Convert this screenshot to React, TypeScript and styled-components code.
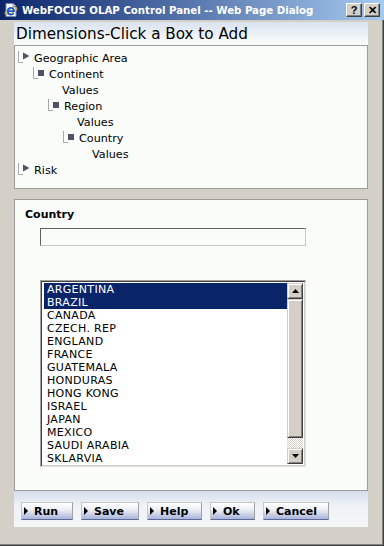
import { styled, createGlobalStyle } from "styled-components";

const countries = [
  "ARGENTINA",
  "BRAZIL",
  "CANADA",
  "CZECH. REP",
  "ENGLAND",
  "FRANCE",
  "GUATEMALA",
  "HONDURAS",
  "HONG KONG",
  "ISRAEL",
  "JAPAN",
  "MEXICO",
  "SAUDI ARABIA",
  "SKLARVIA",
];
const selected = ["ARGENTINA", "BRAZIL"];

type TreeNode = {
  label: string;
  level: number;
  kind: "group" | "dim" | "values";
};

const tree: TreeNode[] = [
  { label: "Geographic Area", level: 0, kind: "group" },
  { label: "Continent", level: 1, kind: "dim" },
  { label: "Values", level: 2, kind: "values" },
  { label: "Region", level: 2, kind: "dim" },
  { label: "Values", level: 3, kind: "values" },
  { label: "Country", level: 3, kind: "dim" },
  { label: "Values", level: 4, kind: "values" },
  { label: "Risk", level: 0, kind: "group" },
];

const buttons = [
  { label: "Run", width: 52 },
  { label: "Save", width: 58 },
  { label: "Help", width: 55 },
  { label: "Ok", width: 45 },
  { label: "Cancel", width: 66 },
];

const GlobalStyle = createGlobalStyle`
  html, body {
    margin: 0;
    padding: 0;
    background: #d4d0c8;
  }
  body {
    font-family: "DejaVu Sans", Verdana, sans-serif;
  }
`;

const IeIcon = () => (
  <svg width="16" height="16" viewBox="0 0 16 16">
    <path d="M3 1.5h7l3 3v10H3z" fill="#fff" stroke="#7a8aa8" />
    <path d="M10 1.5v3h3" fill="#dde4f0" stroke="#7a8aa8" />
    <ellipse cx="8" cy="9" rx="6.5" ry="2.2" fill="none" stroke="#e8b030" strokeWidth="1" transform="rotate(-25 8 9)" />
    <path
      d="M5 9.2h6c0-2-1.3-3.3-3-3.3S4.8 7.3 4.8 9.3s1.3 3.3 3.2 3.3c1.2 0 2.2-.6 2.7-1.5"
      fill="none"
      stroke="#1a5ad0"
      strokeWidth="1.8"
    />
  </svg>
);

// L-shaped connector with a play triangle (group) or a square (dimension)
const TreeIcon = ({ kind }: { kind: "group" | "dim" }) => (
  <svg width="12" height="12" viewBox="0 0 12 12">
    <path d="M0.5 0v11.5H5" fill="none" stroke="#a8a8a8" />
    {kind === "group" ? (
      <path d="M5 1.5l6.5 3.5-6.5 3.5z" fill="#4c5468" />
    ) : (
      <rect x="5" y="3" width="6" height="6" fill="#4c5468" />
    )}
  </svg>
);

const Arrow = ({ up }: { up?: boolean }) => (
  <svg width="7" height="4" viewBox="0 0 7 4">
    <path d={up ? "M3.5 0L7 4H0z" : "M0 0h7L3.5 4z"} fill="#000" />
  </svg>
);

export default function App() {
  return (
    <>
      <GlobalStyle />
      <Window>
        <TitleBar>
          <IeIcon />
          <TitleText>WebFOCUS OLAP Control Panel -- Web Page Dialog</TitleText>
          <TitleButtons>
            <TitleButton>?</TitleButton>
            <TitleButton>✕</TitleButton>
          </TitleButtons>
        </TitleBar>
        <Content>
          <Header>Dimensions-Click a Box to Add</Header>
          <TreePanel>
            {tree.map((node, i) => (
              <TreeRow key={i} $level={node.level} $values={node.kind === "values"}>
                {node.kind !== "values" && <TreeIcon kind={node.kind} />}
                <span>{node.label}</span>
              </TreeRow>
            ))}
          </TreePanel>
          <FormPanel>
            <FieldLabel>Country</FieldLabel>
            <SearchInput />
            <ListBox>
              <ListItems>
                {countries.map((c) => (
                  <ListItem key={c} $selected={selected.includes(c)}>
                    {c}
                  </ListItem>
                ))}
              </ListItems>
              <ScrollBar>
                <ScrollButton>
                  <Arrow up />
                </ScrollButton>
                <ScrollThumb />
                <ScrollTrack />
                <ScrollButton>
                  <Arrow />
                </ScrollButton>
              </ScrollBar>
            </ListBox>
          </FormPanel>
          <ButtonBar>
            {buttons.map((b) => (
              <ActionButton key={b.label} $width={b.width}>
                <ButtonArrow />
                {b.label}
              </ActionButton>
            ))}
          </ButtonBar>
        </Content>
      </Window>
    </>
  );
}

const Window = styled.div`
  width: 384px;
  height: 546px;
  box-sizing: border-box;
  display: flex;
  flex-direction: column;
  background: #d4d0c8;
  box-shadow: inset -1px -1px #404040, inset -2px -2px #808080;
  overflow: hidden;
`;

const TitleBar = styled.div`
  height: 20px;
  display: flex;
  align-items: center;
  padding: 0 4px 0 3px;
  gap: 3px;
  background: linear-gradient(to right, #0a246a, #a6caf0);
`;

const TitleText = styled.div`
  flex: 1;
  color: #fff;
  font-family: "DejaVu Sans", Verdana, sans-serif;
  font-weight: bold;
  font-size: 10.2px;
  white-space: nowrap;
`;

const TitleButtons = styled.div`
  display: flex;
  gap: 2px;
`;

const TitleButton = styled.div`
  width: 16px;
  height: 14px;
  box-sizing: border-box;
  background: #d4d0c8;
  border: 1px solid;
  border-color: #fff #404040 #404040 #fff;
  box-shadow: inset -1px -1px #808080;
  display: flex;
  align-items: center;
  justify-content: center;
  font-family: "Liberation Sans", Arial, sans-serif;
  font-weight: bold;
  font-size: 11px;
  color: #000;
`;

const Content = styled.div`
  display: flex;
  flex-direction: column;
  padding: 2px 16px 0 14px;
`;

const Header = styled.div`
  height: 23px;
  display: flex;
  align-items: center;
  padding-left: 2px;
  background: linear-gradient(#dae2ef, #f2f5f9 70%, #fbfcfb);
  font-size: 15.2px;
  color: #000;
  white-space: nowrap;
`;

const TreePanel = styled.div`
  height: 144px;
  box-sizing: border-box;
  border: 1px solid #9c9c9c;
  background: #fafcfa;
  padding: 4px 0 0 3px;
`;

const TreeRow = styled.div<{ $level: number; $values: boolean }>`
  height: 16px;
  display: flex;
  align-items: center;
  gap: 4px;
  padding-left: ${(p) => p.$level * 15 + (p.$values ? 14 : 0)}px;
  font-size: 11.2px;
  color: #000;

  svg {
    margin-top: -3px;
  }
`;

const FormPanel = styled.div`
  margin-top: 10px;
  height: 292px;
  box-sizing: border-box;
  border: 1px solid #9c9c9c;
  background: #fafcfa;
  padding: 8px 0 0 10px;
  display: flex;
  flex-direction: column;
  align-items: flex-start;
`;

const FieldLabel = styled.div`
  font-size: 11px;
  font-weight: bold;
  line-height: 13px;
  color: #000;
`;

const SearchInput = styled.div`
  margin: 7px 0 0 15px;
  width: 266px;
  height: 18px;
  box-sizing: border-box;
  background: #fafcfa;
  border: 1px solid;
  border-color: #606060 #c8c8c8 #c8c8c8 #606060;
`;

const ListBox = styled.div`
  margin: 34px 0 0 15px;
  width: 266px;
  height: 187px;
  box-sizing: border-box;
  border: 1px solid;
  border-color: #a0a0a0 #e0e0e0 #e0e0e0 #a0a0a0;
  box-shadow: inset 1px 1px #404040, inset -1px -1px #d4d0c8;
  padding: 2px 2px 2px 3px;
  display: flex;
  background: #fff;
`;

const ListItems = styled.div`
  flex: 1;
  display: flex;
  flex-direction: column;
`;

const ListItem = styled.div<{ $selected: boolean }>`
  height: 13px;
  line-height: 13px;
  padding-left: 3px;
  font-size: 11px;
  letter-spacing: 0.3px;
  white-space: nowrap;
  color: ${(p) => (p.$selected ? "#fff" : "#000")};
  background: ${(p) => (p.$selected ? "#0a246a" : "transparent")};
`;

const ScrollBar = styled.div`
  width: 16px;
  display: flex;
  flex-direction: column;
`;

const raised = `
  box-sizing: border-box;
  background: #d4d0c8;
  border: 1px solid;
  border-color: #d4d0c8 #404040 #404040 #d4d0c8;
  box-shadow: inset 1px 1px #fff, inset -1px -1px #808080;
`;

const ScrollButton = styled.div`
  ${raised}
  height: 16px;
  display: flex;
  align-items: center;
  justify-content: center;
`;

const ScrollThumb = styled.div`
  ${raised}
  height: 139px;
`;

const ScrollTrack = styled.div`
  flex: 1;
  background: repeating-conic-gradient(#d4d0c8 0 25%, #fff 0 50%) 0 0 / 2px 2px;
`;

const ButtonBar = styled.div`
  height: 36px;
  box-sizing: border-box;
  padding: 11px 0 0 7px;
  display: flex;
  align-items: flex-start;
  gap: 8px;
  background: linear-gradient(#d4deec, #eef2f7 40%, #f4f6f6);
`;

const ActionButton = styled.div<{ $width: number }>`
  width: ${(p) => p.$width}px;
  height: 18px;
  box-sizing: border-box;
  display: flex;
  align-items: center;
  gap: 6px;
  padding-left: 2px;
  border: 1px solid;
  border-color: #c8c8c8 #a0a0a0 #5a6a9a #c8c8c8;
  background: linear-gradient(#ffffff, #eef0f8 40%, #aab4d8);
  font-size: 11px;
  font-weight: bold;
  color: #000;
`;

const ButtonArrow = styled.span`
  width: 0;
  height: 0;
  border-top: 4px solid transparent;
  border-bottom: 4px solid transparent;
  border-left: 4px solid #000;
`;
